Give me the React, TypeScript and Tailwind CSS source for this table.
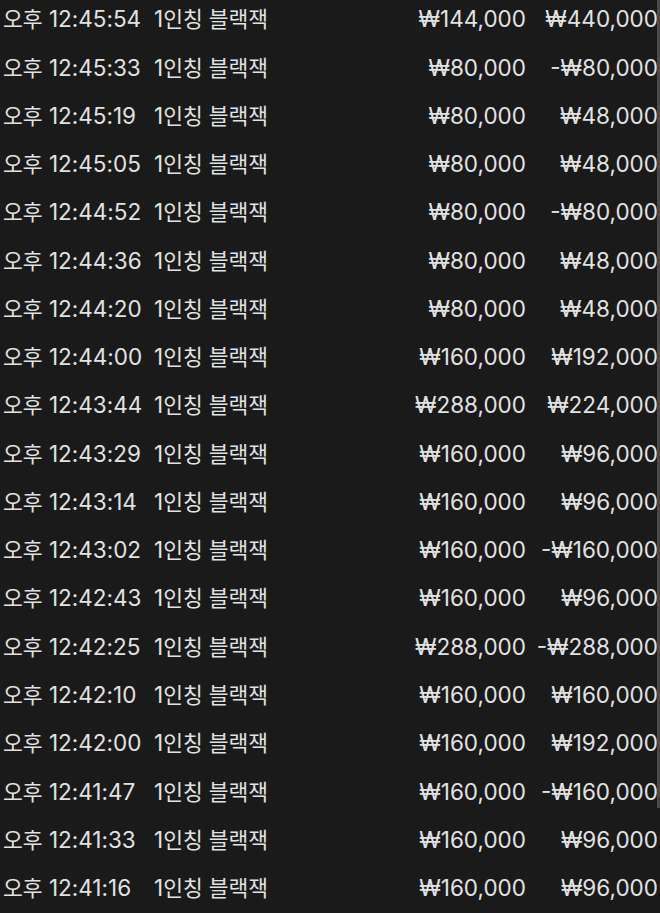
import React from "react";

const rows: [string, string, string][] = [
  ["12:45:54", "₩144,000", "₩440,000"],
  ["12:45:33", "₩80,000", "-₩80,000"],
  ["12:45:19", "₩80,000", "₩48,000"],
  ["12:45:05", "₩80,000", "₩48,000"],
  ["12:44:52", "₩80,000", "-₩80,000"],
  ["12:44:36", "₩80,000", "₩48,000"],
  ["12:44:20", "₩80,000", "₩48,000"],
  ["12:44:00", "₩160,000", "₩192,000"],
  ["12:43:44", "₩288,000", "₩224,000"],
  ["12:43:29", "₩160,000", "₩96,000"],
  ["12:43:14", "₩160,000", "₩96,000"],
  ["12:43:02", "₩160,000", "-₩160,000"],
  ["12:42:43", "₩160,000", "₩96,000"],
  ["12:42:25", "₩288,000", "-₩288,000"],
  ["12:42:10", "₩160,000", "₩160,000"],
  ["12:42:00", "₩160,000", "₩192,000"],
  ["12:41:47", "₩160,000", "-₩160,000"],
  ["12:41:33", "₩160,000", "₩96,000"],
  ["12:41:16", "₩160,000", "₩96,000"],
];

export default function App() {
  return (
    <div
      className="relative w-[660px] h-[913px] overflow-hidden bg-[#1a1a1a] text-[#e2e2e2] text-[22.5px]"
      style={{ fontFamily: 'Inter, "Noto Sans CJK KR", sans-serif' }}
    >
      <div className="-mt-[5px] flex flex-col">
        {rows.map(([t, a, b], i) => (
          <div key={i} className="flex h-[48.28px] items-center pl-[3px] pr-[2px] whitespace-nowrap">
            <div className="w-[151px]">
              <span className="text-[21.5px]">오후</span> {t}
            </div>
            <div className="w-[150px]">
              1<span className="text-[21.5px]">인칭 블랙잭</span>
            </div>
            <div className="w-[222px] text-right">{a}</div>
            <div className="flex-1 text-right">{b}</div>
          </div>
        ))}
      </div>
      <div className="absolute right-0 top-0 h-[808px] w-[3px] bg-[#4a4a4a]" />
    </div>
  );
}
